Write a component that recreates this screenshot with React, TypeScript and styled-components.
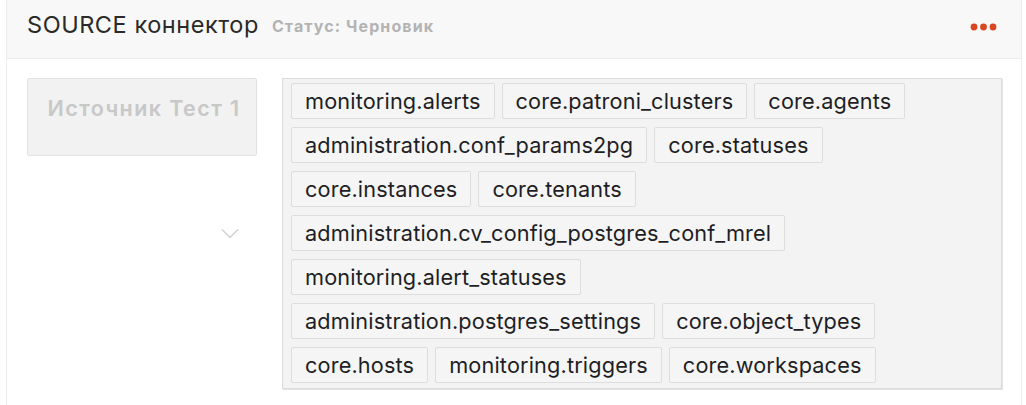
import React from "react";
import styled, { createGlobalStyle } from "styled-components";

const GlobalStyle = createGlobalStyle`
  html, body {
    margin: 0;
    padding: 0;
    background: #ffffff;
  }
  body {
    font-family: Inter, "Noto Sans", "Liberation Sans", sans-serif;
    color: #222;
  }
  * { box-sizing: border-box; }
`;

const Card = styled.section`
  margin-left: 6px;
  width: 1016px;
  border-left: 1px solid #ececec;
  border-right: 1px solid #ececec;
  background: #fff;
`;

const Header = styled.header`
  height: 59px;
  display: flex;
  align-items: center;
  padding: 0 23px 10px 20px;
  background: #f8f8f8;
  border-bottom: 1px solid #ececec;
`;

const Title = styled.h2`
  margin: 0;
  font-size: 23.5px;
  font-weight: 400;
  color: #2a2a2a;
  letter-spacing: 0.55px;
`;

const Status = styled.span`
  margin-left: 13px;
  font-size: 16px;
  font-weight: 700;
  color: #b3b3b3;
  letter-spacing: 1.1px;
  padding-top: 3px;
`;

const MenuButton = styled.button`
  margin-left: auto;
  margin-top: 5px;
  border: 0;
  padding: 0;
  background: transparent;
  display: flex;
  cursor: pointer;
`;

const Body = styled.div`
  display: grid;
  grid-template-columns: 230px 1fr;
  column-gap: 25px;
  padding: 19px 19px 20px 20px;
`;

const SourceColumn = styled.div`
  display: grid;
  grid-template: 1fr / 1fr;
`;

const SourceBox = styled.div`
  grid-area: 1 / 1;
  align-self: start;
  height: 78px;
  padding: 16px 0 0 4px;
  text-align: center;
  background: #f2f2f2;
  border: 1px solid #e2e2e2;
  border-radius: 2px;
  font-size: 21.5px;
  font-weight: 600;
  letter-spacing: 1.4px;
  color: #c8c8c8;
`;

const Chevron = styled.div`
  grid-area: 1 / 1;
  align-self: center;
  justify-self: end;
  margin-right: 18px;
  display: flex;
`;

const TagBox = styled.div`
  display: flex;
  flex-wrap: wrap;
  align-content: flex-start;
  gap: 8px 7px;
  padding: 4px 66px 5px 8px;
  background: #f3f3f3;
  border: 1px solid #dcdcdc;
  box-shadow: 1px 1px 0 #e2e2e2;
`;

const Tag = styled.span`
  height: 36px;
  display: inline-flex;
  align-items: center;
  padding: 0 13px;
  background: #f5f5f5;
  border: 1px solid #dddddd;
  border-radius: 2px;
  font-size: 21.7px;
  letter-spacing: 0.15px;
  color: #1e1e24;
  white-space: nowrap;
`;

const tables = [
  "monitoring.alerts",
  "core.patroni_clusters",
  "core.agents",
  "administration.conf_params2pg",
  "core.statuses",
  "core.instances",
  "core.tenants",
  "administration.cv_config_postgres_conf_mrel",
  "monitoring.alert_statuses",
  "administration.postgres_settings",
  "core.object_types",
  "core.hosts",
  "monitoring.triggers",
  "core.workspaces",
];

export default function App() {
  return (
    <>
      <GlobalStyle />
      <Card>
        <Header>
          <Title>SOURCE коннектор</Title>
          <Status>Статус: Черновик</Status>
          <MenuButton aria-label="Меню">
            <svg width="28" height="8" viewBox="0 0 28 8">
              <circle cx="4" cy="4" r="3.4" fill="#d9461f" />
              <circle cx="13.5" cy="4" r="3.4" fill="#d9461f" />
              <circle cx="23" cy="4" r="3.4" fill="#d9461f" />
            </svg>
          </MenuButton>
        </Header>
        <Body>
          <SourceColumn>
            <SourceBox>Источник Тест 1</SourceBox>
            <Chevron>
              <svg width="18" height="11" viewBox="0 0 18 11">
                <path d="M1 1.5 L9 9.5 L17 1.5" fill="none" stroke="#cfcfcf" strokeWidth="1.3" />
              </svg>
            </Chevron>
          </SourceColumn>
          <TagBox>
            {tables.map((t) => (
              <Tag key={t}>{t}</Tag>
            ))}
          </TagBox>
        </Body>
      </Card>
    </>
  );
}
